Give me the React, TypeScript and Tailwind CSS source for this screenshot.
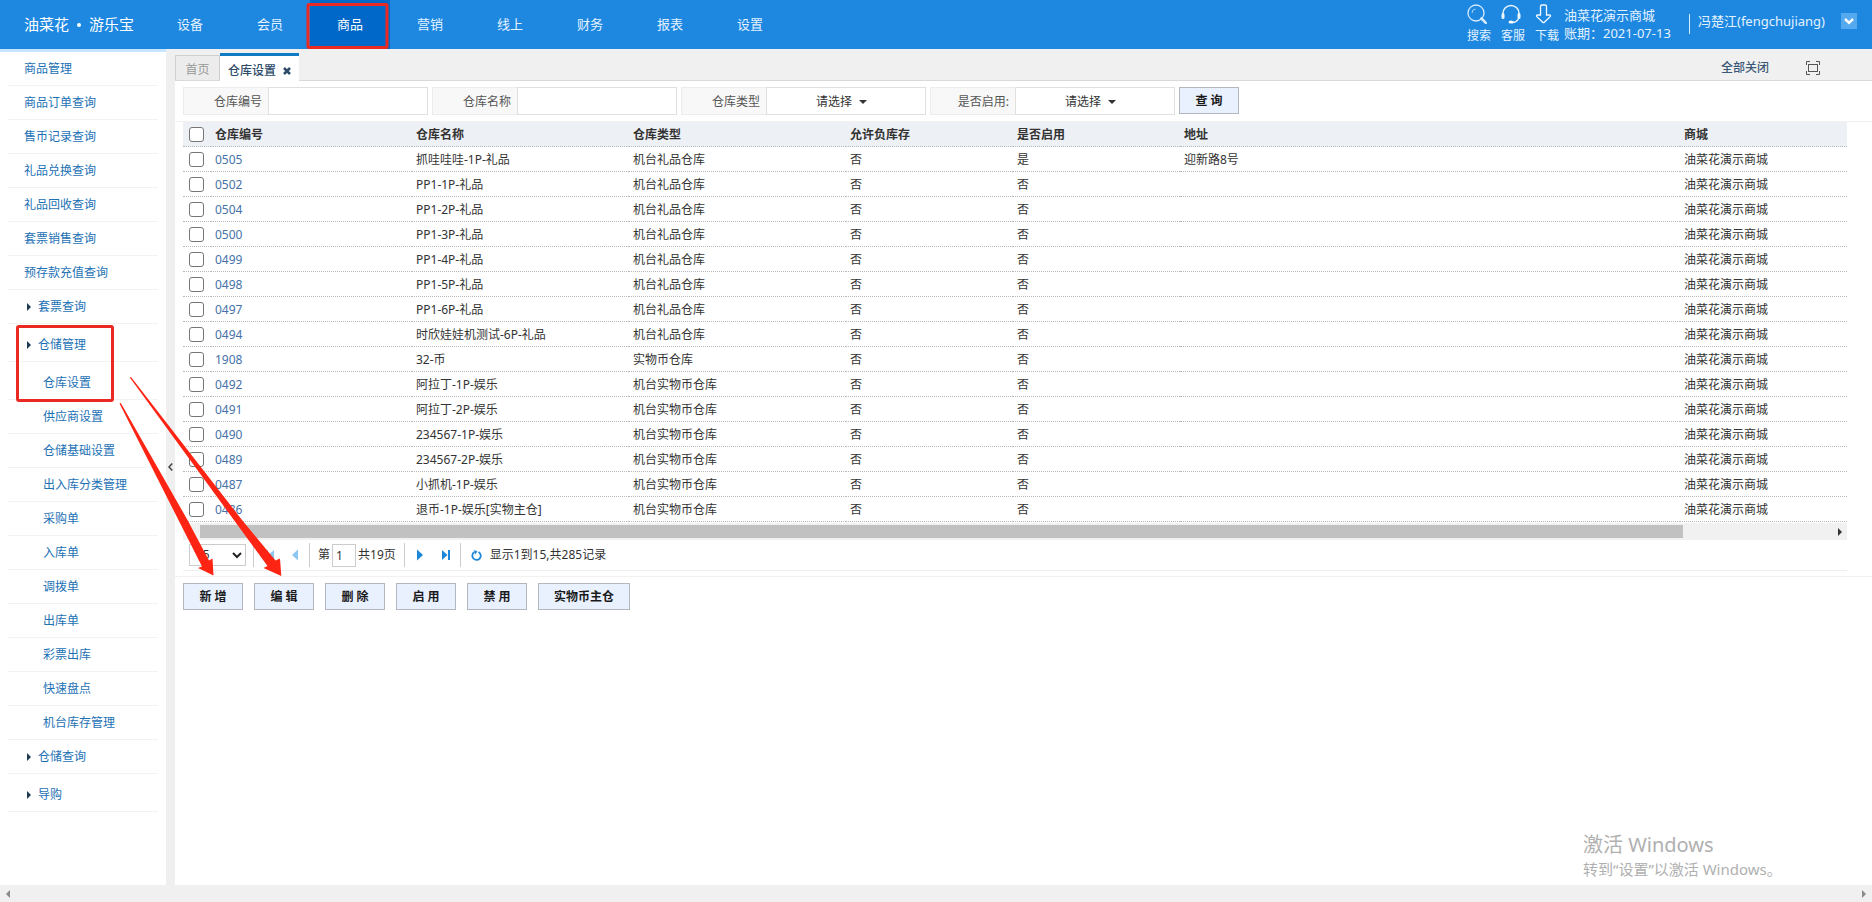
import { clsx } from "clsx";

// ─── Data ───────────────────────────────────────────────────

const navItems = ["设备", "会员", "商品", "营销", "线上", "财务", "报表", "设置"];

interface MenuItem {
  label: string;
  kind: "top" | "group" | "child";
  tall?: boolean;
}

const menuItems: MenuItem[] = [
  { label: "商品管理", kind: "top" },
  { label: "商品订单查询", kind: "top" },
  { label: "售币记录查询", kind: "top" },
  { label: "礼品兑换查询", kind: "top" },
  { label: "礼品回收查询", kind: "top" },
  { label: "套票销售查询", kind: "top" },
  { label: "预存款充值查询", kind: "top" },
  { label: "套票查询", kind: "group" },
  { label: "仓储管理", kind: "group", tall: true },
  { label: "仓库设置", kind: "child", tall: true },
  { label: "供应商设置", kind: "child" },
  { label: "仓储基础设置", kind: "child" },
  { label: "出入库分类管理", kind: "child" },
  { label: "采购单", kind: "child" },
  { label: "入库单", kind: "child" },
  { label: "调拨单", kind: "child" },
  { label: "出库单", kind: "child" },
  { label: "彩票出库", kind: "child" },
  { label: "快速盘点", kind: "child" },
  { label: "机台库存管理", kind: "child" },
  { label: "仓储查询", kind: "group" },
  { label: "导购", kind: "group", tall: true },
];

interface Warehouse {
  code: string;
  name: string;
  type: string;
  enabled: string;
  address?: string;
}

const warehouses: Warehouse[] = [
  { code: "0505", name: "抓哇哇哇-1P-礼品", type: "机台礼品仓库", enabled: "是", address: "迎新路8号" },
  { code: "0502", name: "PP1-1P-礼品", type: "机台礼品仓库", enabled: "否" },
  { code: "0504", name: "PP1-2P-礼品", type: "机台礼品仓库", enabled: "否" },
  { code: "0500", name: "PP1-3P-礼品", type: "机台礼品仓库", enabled: "否" },
  { code: "0499", name: "PP1-4P-礼品", type: "机台礼品仓库", enabled: "否" },
  { code: "0498", name: "PP1-5P-礼品", type: "机台礼品仓库", enabled: "否" },
  { code: "0497", name: "PP1-6P-礼品", type: "机台礼品仓库", enabled: "否" },
  { code: "0494", name: "时欣娃娃机测试-6P-礼品", type: "机台礼品仓库", enabled: "否" },
  { code: "1908", name: "32-币", type: "实物币仓库", enabled: "否" },
  { code: "0492", name: "阿拉丁-1P-娱乐", type: "机台实物币仓库", enabled: "否" },
  { code: "0491", name: "阿拉丁-2P-娱乐", type: "机台实物币仓库", enabled: "否" },
  { code: "0490", name: "234567-1P-娱乐", type: "机台实物币仓库", enabled: "否" },
  { code: "0489", name: "234567-2P-娱乐", type: "机台实物币仓库", enabled: "否" },
  { code: "0487", name: "小抓机-1P-娱乐", type: "机台实物币仓库", enabled: "否" },
  { code: "0486", name: "退币-1P-娱乐[实物主仓]", type: "机台实物币仓库", enabled: "否" },
];

const headings = ["仓库编号", "仓库名称", "仓库类型", "允许负库存", "是否启用", "地址", "商城"];

const actions = ["新 增", "编 辑", "删 除", "启 用", "禁 用", "实物币主仓"];

// ─── Icons ──────────────────────────────────────────────────

function SearchIcon() {
  return (
    <svg className="size-5" viewBox="0 0 20 20" fill="none" stroke="#d5ebff" aria-hidden="true">
      <circle cx="9" cy="9" r="8" strokeWidth="1.3" />
      <path d="M5 9a4 4 0 0 1 3.500-4" strokeWidth="1" opacity="0.8" />
      <path d="M14.500 14.500l4.300 4.300" strokeWidth="2.600" strokeLinecap="round" />
    </svg>
  );
}

function HeadsetIcon() {
  return (
    <svg className="size-5" viewBox="0 0 20 20" fill="none" stroke="#eaf5ff" aria-hidden="true">
      <path d="M2 11.500V9.500a8 8 0 0 1 16 0v2" strokeWidth="1.500" />
      <path d="M2 10.500v3M18 10.500v3" strokeWidth="3" strokeLinecap="round" />
      <path d="M17.500 14.500c-1 2.500-3.500 4-6.500 4" strokeWidth="1.300" />
      <ellipse cx="10" cy="18" rx="2.500" ry="1.500" fill="#fff" stroke="none" />
    </svg>
  );
}

function DownloadIcon() {
  return (
    <svg className="size-5" viewBox="0 0 20 20" fill="none" stroke="#f2f9ff" aria-hidden="true">
      <path
        d="M5.500 2.500a1.500 1.500 0 0 1 1.500-1.500h3a1.500 1.500 0 0 1 1.500 1.500V11h3c1 0 1.300.9.700 1.600L9.300 18.300a1.100 1.100 0 0 1-1.600 0L1.800 12.600c-.6-.7-.3-1.600.7-1.600h3z"
        strokeWidth="1.300"
      />
    </svg>
  );
}

function Caret({ className }: { className?: string }) {
  return (
    <svg className={clsx("h-1 w-2", className)} viewBox="0 0 8 4" fill="#333" aria-hidden="true">
      <path d="M0 0h8L4 4z" />
    </svg>
  );
}

function RightTriangle({ className }: { className?: string }) {
  return (
    <svg className={clsx("h-2 w-1", className)} viewBox="0 0 4 8" fill="currentColor" aria-hidden="true">
      <path d="M0 0v8l4-4z" />
    </svg>
  );
}

// ─── Header ─────────────────────────────────────────────────

function Header() {
  return (
    <header className="flex h-[49px] shrink-0 bg-[#1e88e1] text-[13px] text-[#e3f2ff]">
      <a href="#home" className="flex w-[150px] items-center gap-2 pl-6 text-[15px] text-white">
        <span>油菜花</span>
        <span className="size-1 rounded-full bg-white" />
        <span>游乐宝</span>
      </a>
      <nav className="flex">
        {navItems.map((item) => (
          <a
            key={item}
            href={`#${item}`}
            className={clsx(
              "flex w-20 items-center justify-center",
              item === "商品" && "bg-[#0068c8] text-white",
            )}
          >
            {item}
          </a>
        ))}
      </nav>
      <div className="ml-auto flex pr-[15px]">
        <div className="flex gap-[10px] pt-1 text-xs leading-5">
          <button className="flex w-6 flex-col items-start gap-[2px]">
            <SearchIcon />
            搜索
          </button>
          <button className="flex w-6 flex-col items-start gap-[2px]">
            <HeadsetIcon />
            客服
          </button>
          <button className="flex w-6 flex-col items-start gap-[2px]">
            <DownloadIcon />
            下载
          </button>
        </div>
        <div className="w-[130px] pl-[5px] pt-[6px] leading-[18px] whitespace-nowrap">
          <div>油菜花演示商城</div>
          <div>账期：2021-07-13</div>
        </div>
        <div className="mt-[14px] h-5 w-px bg-[#d5ebff]" />
        <div className="w-[151px] pl-2 pt-3 leading-[18px]">冯楚江(fengchujiang)</div>
        <button
          aria-label="用户菜单"
          className="mt-[13px] flex size-4 items-center justify-center bg-[#55a9ee]"
        >
          <svg className="size-3" viewBox="0 0 12 12" fill="none" stroke="#fff" strokeWidth="2.500">
            <path d="M2 4l4 3.800L10 4" />
          </svg>
        </button>
      </div>
    </header>
  );
}

// ─── Sidebar ────────────────────────────────────────────────

function Sidebar() {
  return (
    <aside className="w-[166px] shrink-0 border-t-3 border-[#c5e6fc] bg-white px-2 text-xs text-[#1c71b5]">
      <ul>
        {menuItems.map((item) => (
          <li
            key={item.label}
            className={clsx(
              "border-b border-[#f3f3f3]",
              item.tall ? "h-[38px] pt-1" : "h-[34px]",
            )}
          >
            <a
              href={`#${item.label}`}
              className={clsx(
                "flex h-[33px] items-center",
                item.kind === "top" && "pl-4",
                item.kind === "group" && "pl-[19px]",
                item.kind === "child" && "pl-[35px]",
              )}
            >
              {item.kind === "group" && <RightTriangle className="mr-[7px] text-[#1d3a55]" />}
              {item.label}
            </a>
          </li>
        ))}
      </ul>
    </aside>
  );
}

// ─── Tabs ───────────────────────────────────────────────────

function TabBar() {
  return (
    <div className="flex h-8 items-end border-b border-[#d9d9d9] bg-[#f0f0f0] text-xs">
      <button className="h-[25px] w-[45px] border border-b-0 border-[#cfcfcf] bg-[#ececec] pt-1 text-[#999]">
        首页
      </button>
      <div className="-mb-px flex h-7 items-center border-t-3 border-[#0f7bc4] bg-white px-2 pt-1 font-medium text-[#2d4a68]">
        仓库设置
        <button aria-label="关闭" className="ml-[7px] flex size-2">
          <svg className="size-2" viewBox="0 0 8 8" stroke="#2d4a68" strokeWidth="2.500">
            <path d="M1 1l6 6M7 1L1 7" />
          </svg>
        </button>
      </div>
      <div className="ml-auto flex items-center gap-[37px] self-center pr-[52px] pt-[6px]">
        <button className="font-medium text-[#3c5878]">全部关闭</button>
        <button aria-label="全屏">
          <svg className="size-[14px]" viewBox="0 0 14 14" fill="none" stroke="#555">
            <path d="M.5 4V.5H4M10 .5h3.500V4M13.500 10v3.500H10M4 13.500H.5V10" />
            <rect x="2.500" y="3.500" width="9" height="7" />
          </svg>
        </button>
      </div>
    </div>
  );
}

// ─── Filters ────────────────────────────────────────────────

const labelClass =
  "flex w-[85px] items-center justify-end border border-r-0 border-[#ececec] bg-[#f8f8f8] pr-[6px] pt-[2px] text-[#555]";

function TextFilter({ id, label }: { id: string; label: string }) {
  return (
    <div className="flex h-7">
      <label htmlFor={id} className={labelClass}>
        {label}
      </label>
      <input id={id} className="w-40 border border-[#e0e0e0] bg-white px-2 outline-none" />
    </div>
  );
}

function SelectFilter({ id, label }: { id: string; label: string }) {
  return (
    <div className="flex h-7">
      <label htmlFor={id} className={labelClass}>
        {label}
      </label>
      <div className="relative flex">
        <select
          id={id}
          className="w-40 appearance-none border border-[#e0e0e0] bg-white pl-[49px] pt-[2px] text-[#333] outline-none"
        >
          <option>请选择</option>
        </select>
        <Caret className="pointer-events-none absolute left-[93px] top-[13px]" />
      </div>
    </div>
  );
}

const buttonClass =
  "h-[27px] border border-[#b3b7be] bg-[#e9f1fe] font-bold text-[#1a1a1a] whitespace-pre";

function Filters() {
  return (
    <form className="flex items-start gap-1 border-b border-[#f2f2f2] py-[6px] pl-2">
      <TextFilter id="code" label="仓库编号" />
      <TextFilter id="name" label="仓库名称" />
      <SelectFilter id="type" label="仓库类型" />
      <SelectFilter id="enabled" label="是否启用:" />
      <button type="button" className={clsx(buttonClass, "w-[60px]")}>
        查 询
      </button>
    </form>
  );
}

// ─── Table ──────────────────────────────────────────────────

function Checkbox({ label }: { label: string }) {
  return (
    <input
      type="checkbox"
      aria-label={label}
      className="block size-[15px] appearance-none rounded-[3px] border border-[#767676] bg-white"
    />
  );
}

const cellClass = "h-[25px] border-b border-dotted border-[#b8b8b8]";
const textCellClass = `${cellClass} pb-0 pl-1 pt-[2px]`;
const checkCellClass = `${cellClass} py-0 pl-[6px]`;

function WarehouseTable() {
  return (
    <table className="w-full table-fixed border-separate border-spacing-0 text-left leading-4 text-[#333]">
      <colgroup>
        <col className="w-7" />
        <col className="w-[201px]" />
        <col className="w-[217px]" />
        <col className="w-[217px]" />
        <col className="w-[167px]" />
        <col className="w-[167px]" />
        <col />
        <col className="w-[167px]" />
      </colgroup>
      <thead>
        <tr className="bg-[#edf0f5]">
          <th className={checkCellClass}>
            <Checkbox label="全选" />
          </th>
          {headings.map((heading) => (
            <th key={heading} className={clsx(textCellClass, "font-semibold text-[#333]")}>
              {heading}
            </th>
          ))}
        </tr>
      </thead>
      <tbody>
        {warehouses.map((w) => (
          <tr key={w.code}>
            <td className={checkCellClass}>
              <Checkbox label={w.code} />
            </td>
            <td className={textCellClass}>
              <a href={`#${w.code}`} className="text-[#4672a8]">
                {w.code}
              </a>
            </td>
            <td className={textCellClass}>{w.name}</td>
            <td className={textCellClass}>{w.type}</td>
            <td className={textCellClass}>否</td>
            <td className={textCellClass}>{w.enabled}</td>
            <td className={textCellClass}>{w.address}</td>
            <td className={textCellClass}>油菜花演示商城</td>
          </tr>
        ))}
      </tbody>
    </table>
  );
}

// ─── Pagination ─────────────────────────────────────────────

function Divider() {
  return <span className="h-6 w-px bg-[#ccc]" />;
}

function Pagination() {
  return (
    <div className="flex h-[31px] items-center border-b border-[#efefef] pl-[6px] text-[#333]">
      <div className="relative mr-[7px] flex">
        <select
          aria-label="每页条数"
          className="h-[22px] w-[57px] appearance-none border border-[#ccc] bg-white pl-[6px] outline-none"
        >
          <option>15</option>
        </select>
        <svg
          className="pointer-events-none absolute right-1 top-2 h-[7px] w-[10px]"
          viewBox="0 0 10 7"
          fill="none"
          stroke="#222"
          strokeWidth="2"
          aria-hidden="true"
        >
          <path d="M1 1l4 4 4-4" />
        </svg>
      </div>
      <Divider />
      <button aria-label="首页" className="ml-3">
        <svg className="h-3 w-2" viewBox="0 0 8 12" fill="#8dc6f0">
          <path d="M0 1h2v10H0zM8 1v10L2.500 6z" />
        </svg>
      </button>
      <button aria-label="上一页" className="ml-[18px] mr-[11px]">
        <svg className="h-3 w-[6px]" viewBox="0 0 6 12" fill="#8dc6f0">
          <path d="M6 .5v11L0 6z" />
        </svg>
      </button>
      <Divider />
      <label htmlFor="page" className="ml-2">
        第
      </label>
      <input
        id="page"
        defaultValue="1"
        className="mx-[2px] h-[23px] w-6 border border-[#ccc] pl-[3px] outline-none"
      />
      共19页
      <span className="ml-2" />
      <Divider />
      <button aria-label="下一页" className="ml-3">
        <svg className="h-3 w-[6px]" viewBox="0 0 6 12" fill="#1e88d8">
          <path d="M0 .5v11L6 6z" />
        </svg>
      </button>
      <button aria-label="末页" className="ml-[19px] mr-[10px]">
        <svg className="h-3 w-2" viewBox="0 0 8 12" fill="#1e88d8">
          <path d="M6 1h2v10H6zM0 1v10l5.500-5z" />
        </svg>
      </button>
      <Divider />
      <button aria-label="刷新" className="ml-[10px] mr-2">
        <svg className="size-[11px]" viewBox="0 0 11 11" fill="none" stroke="#1e88d8" strokeWidth="1.800">
          <path d="M7.500 2A4.200 4.200 0 1 1 3.400 2.100" />
          <path d="M3 0l3.500 1.500L4 4.500z" fill="#1e88d8" stroke="none" />
        </svg>
      </button>
      显示1到15,共285记录
    </div>
  );
}

function GridScrollbar() {
  return (
    <div className="mt-px flex h-[17px] items-center bg-[#f1f1f1] px-[17px]">
      <div className="h-[13px] w-[91%] bg-[#c1c1c1]" />
      <RightTriangle className="-mr-3 ml-auto text-[#333]" />
    </div>
  );
}

// ─── Callouts ───────────────────────────────────────────────

function Callouts() {
  return (
    <svg
      className="pointer-events-none absolute left-0 top-0 h-[600px] w-[420px]"
      viewBox="0 0 420 600"
      fill="none"
      aria-hidden="true"
    >
      <g stroke="#ea2a22" strokeWidth="3">
        <rect x="308" y="4.500" width="79" height="43" rx="1" />
        <rect x="17.500" y="326.500" width="95" height="74" rx="1.500" />
      </g>
      <g fill="#fd2414">
        <path d="M119.500 403.500L202 566.500L198 568L213.500 575.500L212.500 558.500L209 560.500L187.500 520L120.800 403z" />
        <path d="M129.800 377.500L267.500 566L263.500 568L281.300 576L280 558.500L275.500 560.500L242 520L131 377z" />
      </g>
    </svg>
  );
}

// ─── Page ───────────────────────────────────────────────────

export default function App() {
  return (
    <div className="relative flex min-h-screen flex-col bg-white font-['Noto_Sans','Noto_Sans_CJK_SC',sans-serif]">
      <Header />
      <div className="flex grow">
        <Sidebar />
        <div className="flex w-[9px] shrink-0 items-center bg-[#efefef]">
          <button aria-label="收起菜单" className="ml-[2px]">
            <svg className="h-2 w-[5px]" viewBox="0 0 5 8" fill="none" stroke="#444" strokeWidth="1.500">
              <path d="M4.300.5L1 4l3.300 3.500" />
            </svg>
          </button>
        </div>
        <main className="min-w-0 grow text-xs">
          <TabBar />
          <Filters />
          <div className="ml-2 mr-[25px]">
            <WarehouseTable />
            <GridScrollbar />
            <Pagination />
          </div>
          <div className="mt-[5px] flex gap-[11px] border-t border-[#f2f2f2] pl-2 pt-[6px]">
            {actions.map((action) => (
              <button
                key={action}
                className={clsx(buttonClass, action.length > 3 ? "w-[92px]" : "w-[60px]")}
              >
                {action}
              </button>
            ))}
          </div>
        </main>
      </div>
      <div className="flex h-[17px] shrink-0 items-center justify-between bg-[#f0f0f0] px-[6px] text-[#8a8a8a]">
        <RightTriangle className="rotate-180" />
        <RightTriangle />
      </div>
      <div className="pointer-events-none absolute bottom-[22px] right-[89px] w-[200px] whitespace-nowrap text-[#b0b0b0]">
        <div className="text-xl leading-[26px]">激活 Windows</div>
        <div className="text-[15px] leading-[22px]">转到“设置”以激活 Windows。</div>
      </div>
      <Callouts />
    </div>
  );
}
